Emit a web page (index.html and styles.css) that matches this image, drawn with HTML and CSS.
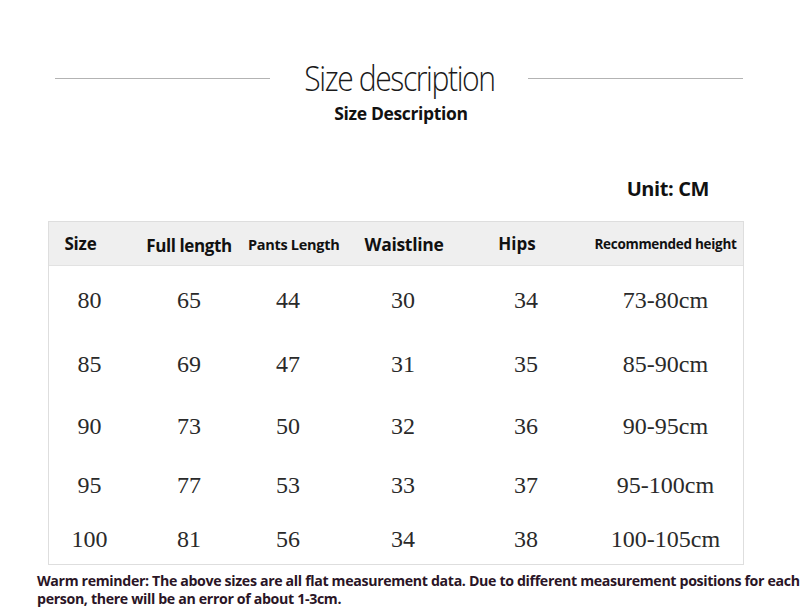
FILE: index.html
```html
<!DOCTYPE html>
<html>
<head>
<meta charset="utf-8">
<link rel="stylesheet" href="styles.css">
</head>
<body>
<div class="page">
  <div class="title-row">
    <div class="rule"></div>
    <h1 class="title"><span class="title-text">Size description</span></h1>
    <div class="rule"></div>
  </div>
  <h2 class="subtitle">Size Description</h2>
  <div class="unit-row"><span class="unit">Unit: CM</span></div>
  <div class="table">
    <div class="row head">
      <div class="cell h-size">Size</div>
      <div class="cell h-full">Full length</div>
      <div class="cell h-pants">Pants Length</div>
      <div class="cell h-waist">Waistline</div>
      <div class="cell h-hips">Hips</div>
      <div class="cell h-rec">Recommended height</div>
    </div>
    <div class="row body r1">
      <div class="cell">80</div><div class="cell">65</div><div class="cell">44</div><div class="cell">30</div><div class="cell">34</div><div class="cell">73-80cm</div>
    </div>
    <div class="row body r2">
      <div class="cell">85</div><div class="cell">69</div><div class="cell">47</div><div class="cell">31</div><div class="cell">35</div><div class="cell">85-90cm</div>
    </div>
    <div class="row body r3">
      <div class="cell">90</div><div class="cell">73</div><div class="cell">50</div><div class="cell">32</div><div class="cell">36</div><div class="cell">90-95cm</div>
    </div>
    <div class="row body r4">
      <div class="cell">95</div><div class="cell">77</div><div class="cell">53</div><div class="cell">33</div><div class="cell">37</div><div class="cell">95-100cm</div>
    </div>
    <div class="row body r5">
      <div class="cell">100</div><div class="cell">81</div><div class="cell">56</div><div class="cell">34</div><div class="cell">38</div><div class="cell">100-105cm</div>
    </div>
  </div>
  <p class="note">Warm reminder: The above sizes are all flat measurement data. Due to different measurement positions for each<br>person, there will be an error of about 1-3cm.</p>
</div>
</body>
</html>
```

FILE: styles.css
```css
* { box-sizing: border-box; }
html, body { margin: 0; padding: 0; background: #ffffff; }
body { width: 800px; height: 610px; overflow: hidden; font-family: "Open Sans", "Liberation Sans", sans-serif; color: #111; }

.page { padding-top: 53px; }

.title-row {
  display: grid;
  grid-template-columns: 215px 258px 215px;
  align-items: center;
  margin-left: 55px;
  height: 50px;
}
.rule { height: 1px; background: #b3b3b3; }
.title { margin: 0; text-align: center; font-weight: 300; font-size: 34px; line-height: 50px; color: #1a1a1a; }
.title-text { display: inline-block; letter-spacing: -1.6px; transform: scaleX(0.885); transform-origin: center; }

.subtitle {
  margin: -2px 0 0 0;
  text-align: center;
  font-size: 17.5px;
  font-weight: 700;
  line-height: 24px;
  letter-spacing: -0.35px;
  color: #111;
  padding-left: 2px;
}

.unit-row { display: flex; justify-content: flex-end; padding-right: 91px; margin-top: 49px; height: 28px; align-items: center; }
.unit { font-size: 20px; font-weight: 700; letter-spacing: -0.4px; color: #111; }

.table {
  margin-top: 19px;
  margin-left: 48px;
  width: 696px;
  border: 1px solid #dedede;
}
.row {
  display: grid;
  grid-template-columns: 81px 118px 80px 150px 96px 169px;
  align-items: center;
}
.row .cell { text-align: center; white-space: nowrap; }
.row .cell:last-child { padding-left: 14px; }

.head { height: 44px; background: #efefef; border-bottom: 1px solid #e2e2e2; }
.head .cell { font-weight: 700; color: #111; }
.h-size { font-size: 17px; padding-right: 18px; letter-spacing: -0.2px; }
.h-full { font-size: 17px; letter-spacing: -0.4px; padding-top: 4px; }
.h-pants { font-size: 14.5px; letter-spacing: -0.3px; padding-top: 2px; padding-right: 10px; }
.h-waist { font-size: 17.5px; letter-spacing: -0.3px; padding-top: 0; padding-left: 2px; }
.h-hips { font-size: 17px; padding-right: 18px; }
.h-rec { font-size: 13.5px; letter-spacing: -0.3px; }

.body .cell { font-family: "Liberation Serif", "Times New Roman", serif; font-size: 24px; color: #2a2a2a; }
.r1 { height: 66px; padding-top: 2px; }
.r2 { height: 64px; }
.r3 { height: 60px; }
.r4 { height: 58px; }
.r5 { height: 50px; }

.note {
  margin: 7px 0 0 37px;
  font-size: 14.2px;
  font-weight: 700;
  line-height: 18px;
  letter-spacing: -0.35px;
  color: #2a1526;
  white-space: nowrap;
}
```
